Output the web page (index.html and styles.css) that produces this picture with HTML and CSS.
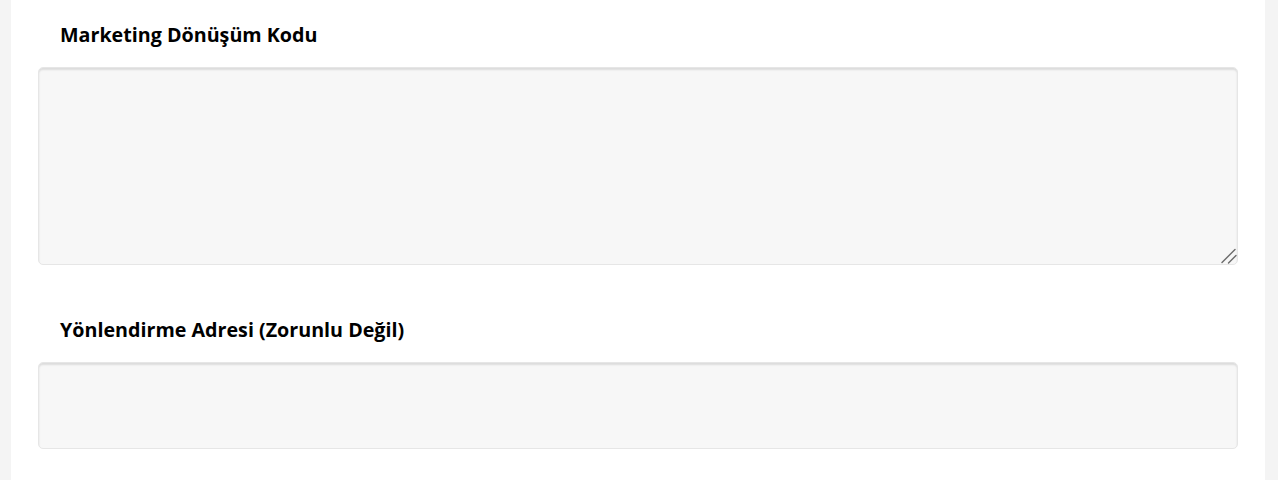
FILE: index.html
```html
<!DOCTYPE html>
<html lang="tr">
<head>
<meta charset="utf-8">
<link rel="stylesheet" href="styles.css">
</head>
<body>
<div class="page">
  <div class="panel">
    <div class="field">
      <label class="label" for="code">Marketing Dönüşüm Kodu</label>
      <div class="textarea-wrap">
        <textarea id="code" class="textarea"></textarea>
        <svg class="grip" width="16" height="16" viewBox="0 0 16 16" aria-hidden="true">
          <path d="M1 14.5 L14 1.5" stroke="#6b6b6b" stroke-width="1.4" stroke-linecap="round"/>
          <path d="M7.5 15 L15 7.5" stroke="#6b6b6b" stroke-width="1.4" stroke-linecap="round"/>
        </svg>
      </div>
    </div>
    <div class="field field-second">
      <label class="label" for="url">Yönlendirme Adresi (Zorunlu Değil)</label>
      <input id="url" class="input" type="text">
    </div>
  </div>
</div>
</body>
</html>
```

FILE: styles.css
```css
html, body {
  margin: 0;
  padding: 0;
  background: #f4f4f4;
  font-family: "Open Sans", "Liberation Sans", sans-serif;
}
.page {
  padding: 0 13px 0 11px;
  height: 480px;
  overflow: hidden;
}
.panel {
  background: #ffffff;
  height: 100%;
  padding: 21px 27px 0 27px;
  box-sizing: border-box;
}
.field {
  display: flex;
  flex-direction: column;
}
.field-second {
  margin-top: 51px;
}
.label {
  font-size: 19.7px;
  font-weight: 700;
  color: #000;
  line-height: 28px;
  padding-left: 22px;
  margin-bottom: 18px;
}
.textarea-wrap {
  position: relative;
}
.textarea, .input {
  display: block;
  box-sizing: border-box;
  width: 100%;
  background: #f7f7f7;
  border: 1px solid #e6e6e6;
  border-radius: 5px;
  box-shadow: inset 0 2px 2px rgba(0,0,0,0.11);
  font-family: inherit;
  font-size: 16px;
  margin: 0;
  outline: none;
}
.textarea {
  height: 198px;
  resize: none;
}
.grip {
  position: absolute;
  right: 1px;
  bottom: 1px;
  pointer-events: none;
}
.input {
  height: 87px;
}
```
